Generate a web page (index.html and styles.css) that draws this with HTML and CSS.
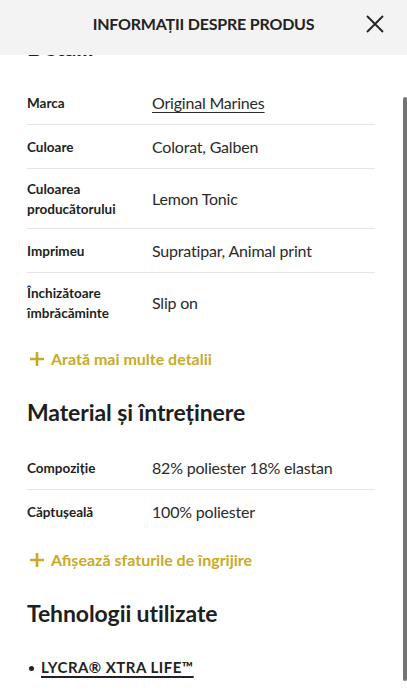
FILE: index.html
```html
<!DOCTYPE html>
<html lang="ro">
<head>
<meta charset="utf-8">
<title>Informații despre produs</title>
<link rel="stylesheet" href="styles.css">
</head>
<body>
<header class="topbar">
  <h1 class="topbar-title">INFORMAȚII DESPRE PRODUS</h1>
  <button class="close-btn" aria-label="Închide">
    <svg width="18" height="18" viewBox="0 0 18 18"><path d="M1 1L17 17M17 1L1 17" stroke="#222" stroke-width="1.8" fill="none"/></svg>
  </button>
</header>
<main class="content">
  <section class="section first">
    <h2 class="section-title">Detalii</h2>
    <dl class="attrs">
      <div class="attr"><dt>Marca</dt><dd><a class="brand" href="#">Original Marines</a></dd></div>
      <div class="attr"><dt>Culoare</dt><dd>Colorat, Galben</dd></div>
      <div class="attr"><dt>Culoarea producătorului</dt><dd>Lemon Tonic</dd></div>
      <div class="attr"><dt>Imprimeu</dt><dd>Supratipar, Animal print</dd></div>
      <div class="attr"><dt>Închizătoare îmbrăcăminte</dt><dd>Slip on</dd></div>
    </dl>
    <a class="more" href="#"><svg class="plus" width="16" height="16" viewBox="0 0 16 16"><path d="M8 1V15M1 8H15" stroke="currentColor" stroke-width="2.6"/></svg>Arată mai multe detalii</a>
  </section>
  <section class="section">
    <h2 class="section-title">Material și întreținere</h2>
    <dl class="attrs">
      <div class="attr"><dt>Compoziție</dt><dd>82% poliester 18% elastan</dd></div>
      <div class="attr"><dt>Căptușeală</dt><dd>100% poliester</dd></div>
    </dl>
    <a class="more" href="#"><svg class="plus" width="16" height="16" viewBox="0 0 16 16"><path d="M8 1V15M1 8H15" stroke="currentColor" stroke-width="2.6"/></svg>Afișează sfaturile de îngrijire</a>
  </section>
  <section class="section">
    <h2 class="section-title">Tehnologii utilizate</h2>
    <ul class="tech">
      <li><a href="#">LYCRA® XTRA LIFE™</a></li>
    </ul>
  </section>
</main>
<div class="scrollbar"><div class="thumb"></div></div>
</body>
</html>
```
FILE: styles.css
```css
* { box-sizing: border-box; }
html, body { margin: 0; padding: 0; }
body {
  width: 407px;
  height: 698px;
  overflow: hidden;
  background: #fff;
  font-family: "Lato", "Noto Sans", sans-serif;
  color: #222;
  position: relative;
}
.topbar {
  position: fixed;
  top: 0; left: 0; right: 0;
  height: 55px;
  background: #f3f3f3;
  display: flex;
  align-items: center;
  justify-content: center;
  padding-bottom: 7px;
  z-index: 5;
}
.topbar-title {
  margin: 0;
  font-size: 16px;
  font-weight: 700;
  letter-spacing: -0.2px;
  color: #222;
  line-height: 20px;
}
.close-btn {
  position: absolute;
  left: 366px;
  top: 15px;
  width: 18px; height: 18px;
  padding: 0; border: 0; background: none;
  display: block;
}
.close-btn svg { display: block; }
.content {
  padding: 32px 32px 0 27px;
}
.section { margin-top: 28px; }
.section.first { margin-top: 0; }
.section-title {
  margin: 0 0 19px;
  font-size: 23px;
  line-height: 30px;
  font-weight: 700;
  letter-spacing: -0.1px;
  color: #1e1e1e;
}
.attrs { margin: 0; }
.attr {
  display: flex;
  align-items: center;
  padding: 10px 0 9px;
  border-bottom: 1px solid #e6e6e6;
}
.attr:last-child { border-bottom: 0; padding-bottom: 10px; }
.attr dt {
  width: 125px;
  flex: none;
  font-size: 13.5px;
  line-height: 20px;
  font-weight: 700;
  color: #1e1e1e;
  padding-right: 8px;
}
.attr dd {
  margin: 0;
  font-size: 16px;
  line-height: 24px;
  letter-spacing: -0.2px;
  color: #2a2a2a;
}
.brand { color: #2a2a2a; text-decoration: underline; text-underline-offset: 3px; text-decoration-thickness: 1px; }
.more {
  margin-top: 16px;
  display: flex;
  align-items: center;
  gap: 6px;
  padding-left: 2px;
  font-size: 16px;
  line-height: 20px;
  font-weight: 700;
  color: #c9aa26;
  text-decoration: none;
}
.plus { display: block; flex: none; }
.tech {
  margin: 29px 0 0;
  padding: 0 0 0 14px;
  list-style: none;
}
.tech li {
  position: relative;
  font-size: 15px;
  line-height: 20px;
  font-weight: 700;
  letter-spacing: 0.5px;
}
.tech li::before {
  content: "";
  position: absolute;
  left: -12px; top: 9px;
  width: 5px; height: 5px;
  border-radius: 50%;
  background: #222;
}
.tech a {
  color: #222;
  text-decoration: underline;
  text-decoration-thickness: 2px;
  text-underline-offset: 3px;
}
.scrollbar {
  position: absolute;
  right: 0; top: 0;
  width: 5px; height: 698px;
}
.thumb {
  position: absolute;
  left: 1px; top: 97px;
  width: 4px; height: 584px;
  background: #747474;
  border-radius: 2px;
}
```
